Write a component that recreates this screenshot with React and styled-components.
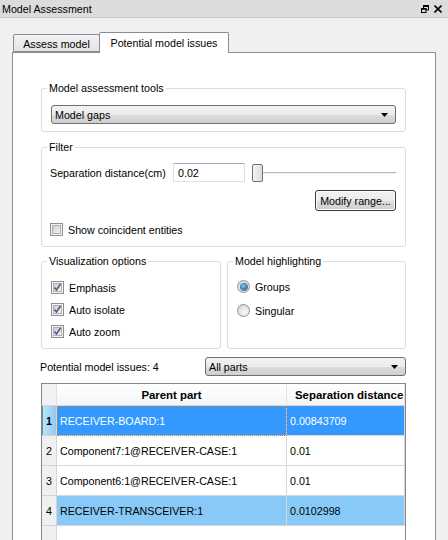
import React from 'react'
import styled, { createGlobalStyle } from 'styled-components'

const Global = createGlobalStyle`
  html, body { margin: 0; padding: 0; background: #f0f0f0; }
  * { box-sizing: border-box; }
`

const Window = styled.div`
  width: 448px;
  height: 540px;
  overflow: hidden;
  background: #f0f0f0;
  font-family: "Liberation Sans", Arial, sans-serif;
  font-size: 10.7px;
  color: #000;
`

const TitleBar = styled.div`
  height: 18px;
  display: flex;
  align-items: center;
  justify-content: space-between;
  padding: 0 6px 0 2px;
  background: #dcdcdc;
  border-bottom: 1px solid #c6c6c6;
`

const TitleButtons = styled.div`
  display: flex;
  gap: 5px;
  align-items: center;
`

const TabRow = styled.div`
  display: flex;
  align-items: flex-end;
  height: 20px;
  margin: 14px 0 0 13px;
`

const Tab = styled.div`
  position: relative;
  display: flex;
  align-items: center;
  justify-content: center;
  width: ${p => p.$w}px;
  height: ${p => (p.$active ? 21 : 18)}px;
  margin-left: ${p => (p.$active ? -1 : 0)}px;
  margin-bottom: ${p => (p.$active ? -1 : 0)}px;
  padding-top: ${p => (p.$active ? 0 : 2)}px;
  border: 1px solid #898c95;
  border-bottom: ${p => (p.$active ? 'none' : '1px solid #898c95')};
  border-radius: 2px 2px 0 0;
  background: ${p => (p.$active ? '#fff' : 'linear-gradient(#f2f2f2, #e4e4e4)')};
  z-index: ${p => (p.$active ? 1 : 0)};
`

const Panel = styled.div`
  margin-left: 12px;
  width: 424px;
  height: 500px;
  background: #fff;
  border: 1px solid #898c95;
  padding: 29px 29px 0 28px;
`

const Group = styled.fieldset`
  margin: 0;
  min-width: 0;
  border: 1px solid #d5dfe5;
  border-radius: 3px;
  padding: ${p => p.$pad || '0'};
  display: flex;
  flex-direction: column;
  gap: ${p => p.$gap || 0}px;
`

/* legend sits 8px from the group's left border whatever the padding */
const Legend = styled.legend`
  line-height: 13px;
  padding: 0 2px;
  margin-left: ${p => 5 - (p.$inset ?? 9)}px;
`

const Stack = styled.div`
  display: flex;
  flex-direction: column;
  gap: ${p => p.$gap}px;
  margin-top: ${p => p.$top || 0}px;
`

const TwoGroups = styled.div`
  display: grid;
  grid-template-columns: 180px 179px;
  gap: 6px;
  margin-top: 8px;
`

const Combo = styled.div`
  height: 19px;
  width: ${p => (p.$w ? `${p.$w}px` : 'auto')};
  display: flex;
  align-items: center;
  justify-content: space-between;
  padding: 0 7px 0 3px;
  border: 1px solid #707070;
  border-radius: 3px;
  background: linear-gradient(#f2f2f2 0%, #ebebeb 50%, #dddddd 51%, #cfcfcf 100%);
`

const Arrow = () => (
  <svg width="7" height="4" viewBox="0 0 7 4">
    <path d="M0 0h7L3.5 4z" fill="#000" />
  </svg>
)

const FilterRow = styled.div`
  display: flex;
  align-items: center;
  height: 19px;
`

const FieldLabel = styled.span`
  width: 123px;
`

const TextInput = styled.div`
  width: 72px;
  height: 19px;
  padding: 0 4px;
  display: flex;
  align-items: center;
  border: 1px solid #dbdfe6;
  border-top-color: #abadb3;
  background: #fff;
`

const Slider = styled.div`
  flex: 1;
  display: flex;
  align-items: center;
  margin-left: 7px;
`

const Handle = styled.div`
  width: 11px;
  height: 18px;
  border: 1px solid #707070;
  border-radius: 2px;
  background: linear-gradient(90deg, #f4f4f4, #dcdcdc);
`

const Groove = styled.div`
  flex: 1;
  height: 2px;
  border-top: 1px solid #b6b6b6;
  border-bottom: 1px solid #f2f2f2;
`

const ButtonRow = styled.div`
  display: flex;
  justify-content: flex-end;
  margin-top: 8px;
`

const Button = styled.div`
  width: 81px;
  height: 21px;
  display: flex;
  align-items: center;
  justify-content: center;
  border: 1px solid #3c3c3c;
  border-radius: 3px;
  background: linear-gradient(#f2f2f2 0%, #ebebeb 50%, #dddddd 51%, #cfcfcf 100%);
  box-shadow: inset 0 0 0 1px #fcfcfc;
`

const Check = styled.label`
  display: flex;
  align-items: center;
  gap: 5px;
  height: 13px;
  margin-top: ${p => p.$top || 0}px;
`

const Box = styled.span`
  width: 13px;
  height: 13px;
  flex: none;
  border: 1px solid #8f8f8f;
  padding: 1px;
  display: flex;
  background: #f4f4f4;
`

const BoxInner = styled.span`
  flex: 1;
  display: flex;
  align-items: center;
  justify-content: center;
  border: 1px solid #b0b0b0;
  background: linear-gradient(135deg, #cbcbcb, #f6f6f6);
`

const CheckBox = ({ checked, children, top }) => (
  <Check $top={top}>
    <Box>
      <BoxInner>
        {checked && (
          <svg width="9" height="9" viewBox="0 0 9 9" style={{ margin: -2 }}>
            <path d="M1.5 4.5l2 2.5 4-6" fill="none" stroke="#4a5e8c" strokeWidth="1.6" />
          </svg>
        )}
      </BoxInner>
    </Box>
    <span>{children}</span>
  </Check>
)

const Radio = styled.label`
  display: flex;
  align-items: center;
  gap: 5px;
  height: 13px;
`

const Circle = styled.span`
  width: 13px;
  height: 13px;
  flex: none;
  border-radius: 50%;
  border: 1px solid #8e8f8f;
  background: radial-gradient(circle at 60% 65%, #fafafa, #cfcfcf);
  display: flex;
  align-items: center;
  justify-content: center;
`

const Dot = styled.span`
  width: 6px;
  height: 6px;
  border-radius: 50%;
  background: radial-gradient(circle at 40% 35%, #7fd0f5, #1d5f8a 80%);
  box-shadow: 0 0 0 1px #3c7fa8;
`

const IssuesRow = styled.div`
  display: flex;
  align-items: center;
  justify-content: space-between;
  margin: 8px 0 0 -1px;
`

const Table = styled.div`
  margin-top: 7px;
  height: 170px;
  border: 1px solid #828790;
  display: grid;
  grid-template-columns: 15px 230px 1fr;
  grid-auto-rows: 30px;
  grid-template-rows: 22px;
  overflow: hidden;
  background: #fff;
`

const Corner = styled.div`
  background: #f2f2f2;
  border-right: 1px solid #e0e0e0;
  border-bottom: 1px solid #d5d5d5;
`

const HeadCell = styled.div`
  display: flex;
  align-items: center;
  justify-content: ${p => (p.$left ? 'flex-start' : 'center')};
  padding-left: ${p => (p.$left ? 8 : 0)}px;
  font-weight: bold;
  font-size: 11.4px;
  white-space: nowrap;
  overflow: hidden;
  background: linear-gradient(#ffffff, #f4f5f7);
  border-right: 1px solid #e3e3e3;
  border-bottom: 1px solid #d5d5d5;
`

const RowHead = styled.div`
  display: flex;
  align-items: center;
  justify-content: center;
  font-weight: ${p => (p.$current ? 'bold' : 'normal')};
  background: ${p => (p.$current ? 'linear-gradient(90deg, #5b8fb3 0 1px, #bfe2f8 1px, #8ccbf2)' : '#f0f0f0')};
  border-right: 1px solid #d5d5d5;
  border-bottom: 1px solid #d5d5d5;
`

const Cell = styled.div`
  display: flex;
  align-items: center;
  padding-left: 3px;
  white-space: nowrap;
  overflow: hidden;
  color: ${p => (p.$sel === 'current' ? '#fff' : '#000')};
  background: ${p => (p.$sel === 'current' ? '#3399ff' : p.$sel === 'other' ? '#89c9f7' : '#fff')};
  border-right: 1px solid #d8d8d8;
  border-bottom: 1px solid #d8d8d8;
  outline: ${p => (p.$focus ? '1px dotted #c7813f' : 'none')};
  outline-offset: -1px;
`

const EmptyHead = styled.div`
  background: #f0f0f0;
  border-right: 1px solid #d5d5d5;
`

const rows = [
  { part: 'RECEIVER-BOARD:1', dist: '0.00843709', sel: 'current' },
  { part: 'Component7:1@RECEIVER-CASE:1', dist: '0.01' },
  { part: 'Component6:1@RECEIVER-CASE:1', dist: '0.01' },
  { part: 'RECEIVER-TRANSCEIVER:1', dist: '0.0102998', sel: 'other' },
]

export default function App() {
  return (
    <Window>
      <Global />
      <TitleBar>
        <span>Model Assessment</span>
        <TitleButtons>
          <svg width="8" height="8" viewBox="0 0 8 8">
            <path d="M2.5 0.5h5v4.5h-5z M2 1h6" fill="none" stroke="#000" strokeWidth="1" />
            <rect x="2" y="0" width="6" height="2" fill="#000" />
            <rect x="0.5" y="3.5" width="4.5" height="4" fill="#dcdcdc" stroke="#000" />
            <rect x="0" y="3" width="5.5" height="1.8" fill="#000" />
          </svg>
          <svg width="8" height="8" viewBox="0 0 8 8">
            <path d="M0.5 0.5l7 7M7.5 0.5l-7 7" stroke="#000" strokeWidth="1.6" />
          </svg>
        </TitleButtons>
      </TitleBar>

      <TabRow>
        <Tab $w={87}>Assess model</Tab>
        <Tab $w={130} $active>Potential model issues</Tab>
      </TabRow>

      <Panel>
        <Group $pad="10px 9px 7px 9px">
          <Legend>Model assessment tools</Legend>
          <Combo>
            <span>Model gaps</span>
            <Arrow />
          </Combo>
        </Group>

        <Stack $gap={0} $top={9}>
          <Group $pad="9px 9px 10px 8px">
            <Legend $inset={8}>Filter</Legend>
            <FilterRow>
              <FieldLabel>Separation distance(cm)</FieldLabel>
              <TextInput>0.02</TextInput>
              <Slider>
                <Handle />
                <Groove />
              </Slider>
            </FilterRow>
            <ButtonRow>
              <Button>Modify range...</Button>
            </ButtonRow>
            <CheckBox top={12}>Show coincident entities</CheckBox>
          </Group>
        </Stack>

        <TwoGroups>
          <Group $pad="13px 9px 10px 9px" $gap={9}>
            <Legend>Visualization options</Legend>
            <CheckBox checked>Emphasis</CheckBox>
            <CheckBox checked>Auto isolate</CheckBox>
            <CheckBox checked>Auto zoom</CheckBox>
          </Group>
          <Group $pad="12px 9px 10px 9px" $gap={11}>
            <Legend>Model highlighting</Legend>
            <Radio>
              <Circle><Dot /></Circle>
              <span>Groups</span>
            </Radio>
            <Radio>
              <Circle />
              <span>Singular</span>
            </Radio>
          </Group>
        </TwoGroups>

        <IssuesRow>
          <span>Potential model issues: 4</span>
          <Combo $w={201}>
            <span>All parts</span>
            <Arrow />
          </Combo>
        </IssuesRow>

        <Table>
          <Corner />
          <HeadCell>Parent part</HeadCell>
          <HeadCell $left>Separation distance</HeadCell>
          {rows.map((r, i) => (
            <React.Fragment key={r.part}>
              <RowHead $current={r.sel === 'current'}>{i + 1}</RowHead>
              <Cell $sel={r.sel} $focus={r.sel === 'current'}>{r.part}</Cell>
              <Cell $sel={r.sel}>{r.dist}</Cell>
            </React.Fragment>
          ))}
          <EmptyHead />
        </Table>
      </Panel>
    </Window>
  )
}
